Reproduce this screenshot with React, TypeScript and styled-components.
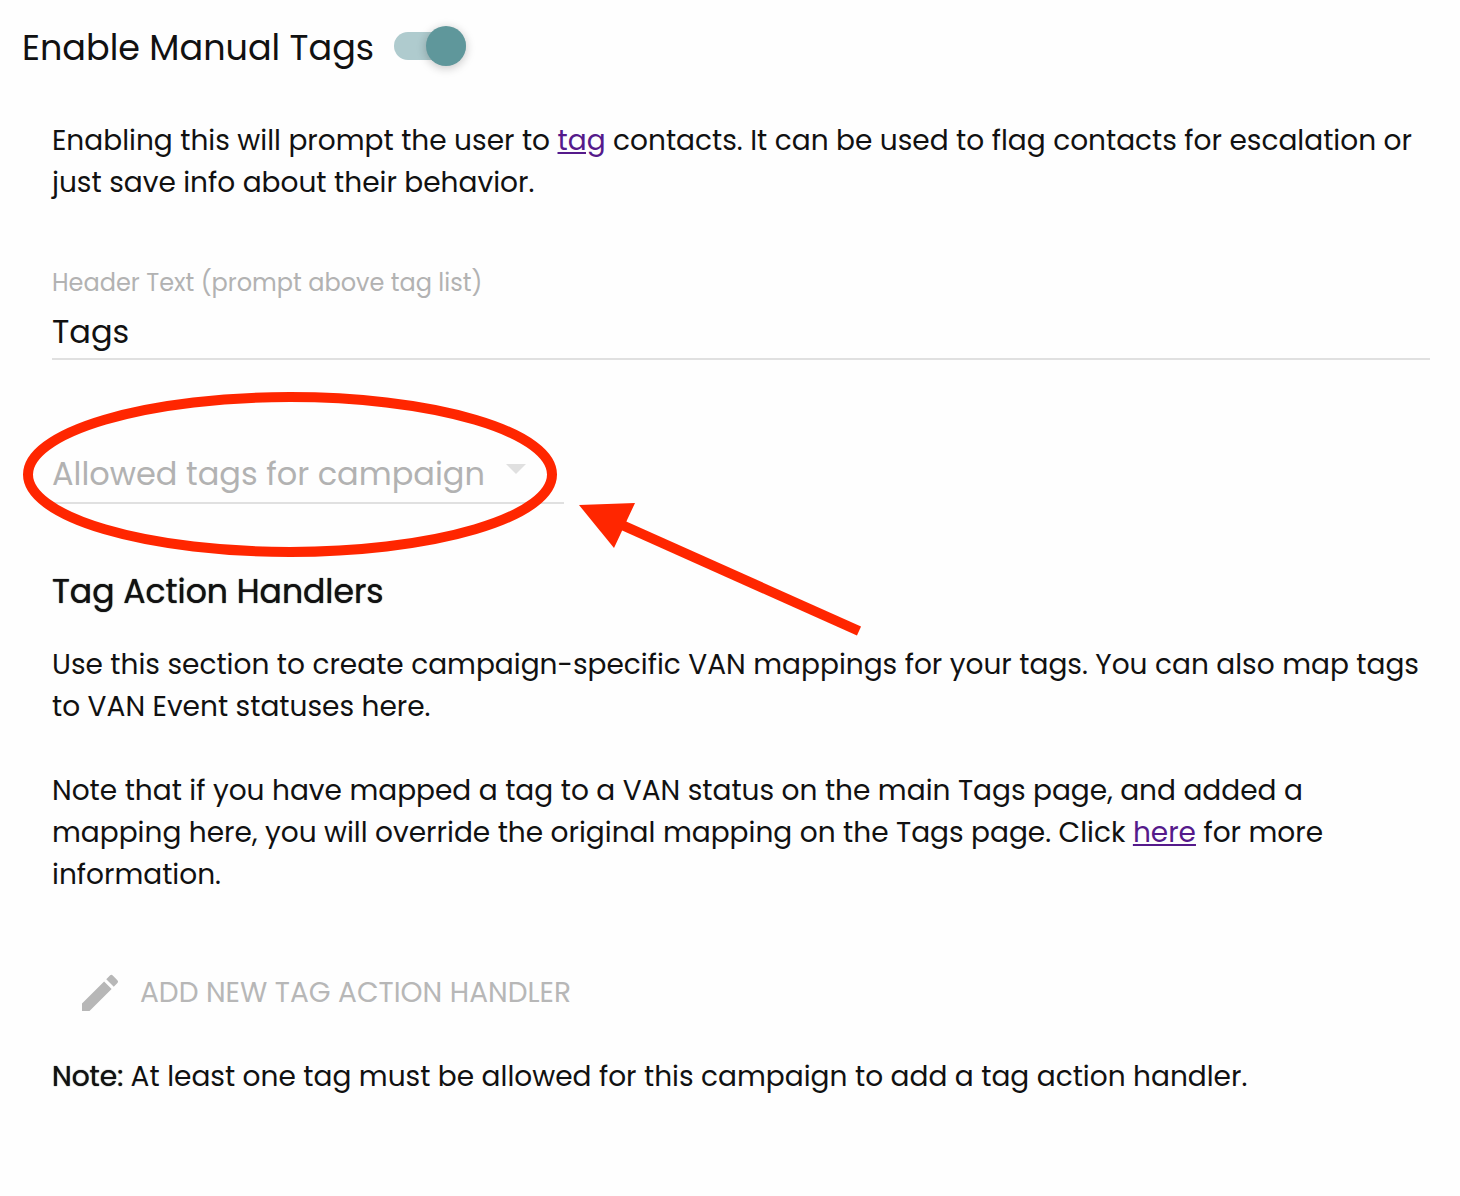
import React, { useState } from "react";
import styled, { createGlobalStyle } from "styled-components";
import { MdEdit } from "react-icons/md";

const GlobalStyle = createGlobalStyle`
  *, *::before, *::after { box-sizing: border-box; }
  body {
    margin: 0;
    background: #fefefe;
    color: #111;
    font-family: Poppins, Inter, "Liberation Sans", sans-serif;
    font-size: 28px;
    line-height: 42px;
  }
`;

const Page = styled.main`
  padding: 24px 30px 98px 22px;
`;

const TitleRow = styled.label`
  display: flex;
  align-items: center;
  gap: 20px;
  width: fit-content;
  font-size: 35px;
  line-height: 48px;
  cursor: pointer;
`;

const Switch = styled.input`
  appearance: none;
  display: flex;
  align-items: center;
  width: 72px;
  height: 28px;
  margin: 0 0 4px;
  border-radius: 14px;
  background: ${(p) => (p.checked ? "#afcbce" : "#bdbdbd")};
  cursor: pointer;

  &::before {
    content: "";
    width: 40px;
    height: 40px;
    flex: none;
    margin-left: ${(p) => (p.checked ? "32px" : "0")};
    border-radius: 50%;
    background: ${(p) => (p.checked ? "#5f979b" : "#f5f5f5")};
    box-shadow: 0 2px 12px rgba(0, 0, 0, 0.12), 0 2px 8px rgba(0, 0, 0, 0.12);
  }
`;

const Section = styled.section`
  padding: 48px 0 0 30px;
`;

const Paragraph = styled.p<{ $gap?: number }>`
  margin: ${(p) => p.$gap ?? 0}px 0 0;
`;

const Link = styled.a`
  color: #551a8b;
  text-decoration: underline;
`;

const Field = styled.div`
  display: flex;
  flex-direction: column;
  margin-top: 61px;
`;

const FieldLabel = styled.label`
  margin-bottom: 7px;
  color: #b2b2b2;
  font-size: 24px;
  line-height: 36px;
`;

const TextInput = styled.input`
  width: 100%;
  height: 52px;
  padding: 0 0 2px;
  border: 0;
  border-bottom: 2px solid #e0e0e0;
  outline: 0;
  background: transparent;
  color: #111;
  font: inherit;
  font-size: 32px;
`;

const SelectField = styled.div`
  position: relative;
  display: grid;
  align-items: center;
  width: 512px;
  max-width: 100%;
  margin-top: 92px;
`;

const Select = styled.select`
  grid-area: 1 / 1;
  appearance: none;
  width: 100%;
  height: 52px;
  padding: 0 64px 6px 0;
  border: 0;
  border-bottom: 2px solid #e0e0e0;
  border-radius: 0;
  outline: 0;
  background: transparent;
  color: #b2b2b2;
  font: inherit;
  font-size: 32px;
  line-height: 44px;
`;

const Caret = styled.span`
  grid-area: 1 / 1;
  justify-self: end;
  width: 20px;
  height: 10px;
  margin: 0 38px 18px 0;
  background: #e0e0e0;
  clip-path: polygon(0 0, 100% 0, 50% 100%);
  pointer-events: none;
`;

const Annotation = styled.svg`
  position: absolute;
  top: -60px;
  left: -29px;
  pointer-events: none;
`;

const Heading = styled.h2`
  margin: 64px 0 28px;
  font-size: 33px;
  font-weight: 400;
  line-height: 48px;
  text-shadow: 0 0 1px currentColor;
`;

const AddButton = styled.button`
  display: flex;
  align-items: center;
  gap: 16px;
  height: 72px;
  margin: 61px 0 27px;
  padding: 0 24px;
  border: 0;
  background: transparent;
  color: #b7b7b7;
  font: inherit;
  text-transform: uppercase;
`;

const Strong = styled.strong`
  font-weight: 400;
  text-shadow: 0 0 1px currentColor;
`;

export default function App() {
  const [enabled, setEnabled] = useState(true);
  const [header, setHeader] = useState("Tags");

  return (
    <>
      <GlobalStyle />
      <Page>
        <TitleRow>
          Enable Manual Tags
          <Switch
            type="checkbox"
            role="switch"
            checked={enabled}
            onChange={(e) => setEnabled(e.target.checked)}
          />
        </TitleRow>
        <Section>
          <Paragraph>
            Enabling this will prompt the user to <Link href="#tag">tag</Link> contacts. It can be
            used to flag contacts for escalation or just save info about their behavior.
          </Paragraph>

          <Field>
            <FieldLabel htmlFor="header-text">Header Text (prompt above tag list)</FieldLabel>
            <TextInput
              id="header-text"
              type="text"
              value={header}
              onChange={(e) => setHeader(e.target.value)}
            />
          </Field>

          <SelectField>
            <Select aria-label="Allowed tags for campaign" defaultValue="">
              <option value="">Allowed tags for campaign</option>
            </Select>
            <Caret />
            <Annotation width="840" height="250" viewBox="0 0 840 250" aria-hidden="true">
              <ellipse cx="267" cy="82.5" rx="262" ry="77.5" fill="none" stroke="#ff2600" strokeWidth="10" />
              <path d="M599 133 L836 239" stroke="#ff2600" strokeWidth="10" />
              <path d="M556 113 L612 111 L591 156 Z" fill="#ff2600" />
            </Annotation>
          </SelectField>

          <Heading>Tag Action Handlers</Heading>
          <Paragraph>
            Use this section to create campaign-specific VAN mappings for your tags. You can also map
            tags to VAN Event statuses here.
          </Paragraph>
          <Paragraph $gap={42}>
            Note that if you have mapped a tag to a VAN status on the main Tags page, and added a
            mapping here, you will override the original mapping on the Tags page. Click{" "}
            <Link href="#here">here</Link> for more information.
          </Paragraph>

          <AddButton type="button" disabled>
            <MdEdit size={48} aria-hidden="true" />
            Add new tag action handler
          </AddButton>

          <Paragraph>
            <Strong>Note:</Strong> At least one tag must be allowed for this campaign to add a tag
            action handler.
          </Paragraph>
        </Section>
      </Page>
    </>
  );
}
